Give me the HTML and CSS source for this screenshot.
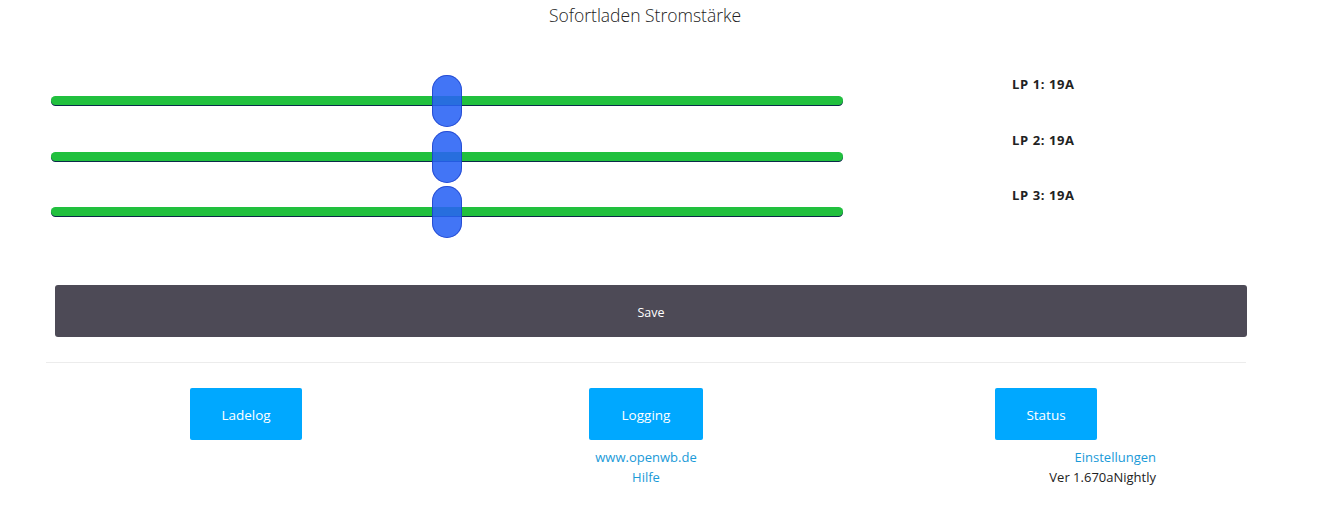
FILE: index.html
```html
<!DOCTYPE html>
<html lang="de">
<head>
<meta charset="utf-8">
<title>Sofortladen Stromstärke</title>
<link rel="stylesheet" href="styles.css">
</head>
<body>
<div class="page">
  <div class="container">
    <h1 class="title">Sofortladen Stromstärke</h1>
    <div class="sliders">
      <div class="slider-row">
        <div class="track"><div class="thumb" style="left: 50%"></div></div>
        <div class="label">LP 1: 19A</div>
      </div>
      <div class="slider-row">
        <div class="track"><div class="thumb" style="left: 50%"></div></div>
        <div class="label">LP 2: 19A</div>
      </div>
      <div class="slider-row">
        <div class="track"><div class="thumb" style="left: 50%"></div></div>
        <div class="label">LP 3: 19A</div>
      </div>
    </div>
    <button class="save">Save</button>
    <hr class="divider">
    <div class="nav">
      <div class="col">
        <a class="btn">Ladelog</a>
      </div>
      <div class="col">
        <a class="btn btn-logging">Logging</a>
        <a class="link">www.openwb.de</a>
        <a class="link">Hilfe</a>
      </div>
      <div class="col col-right">
        <a class="btn btn-status">Status</a>
        <div class="meta">
          <a class="link">Einstellungen</a>
          <span class="version">Ver 1.670aNightly</span>
        </div>
      </div>
    </div>
  </div>
</div>
</body>
</html>
```

FILE: styles.css
```css
html, body {
  margin: 0;
  padding: 0;
  background: #ffffff;
}
body {
  font-family: "Open Sans", "Noto Sans", "DejaVu Sans", sans-serif;
  color: #222;
}
.page {
  width: 1322px;
}
.container {
  width: 1200px;
  margin-left: 46px;
}
.title {
  margin: 0;
  height: 30px;
  line-height: 30px;
  text-align: center;
  font-size: 17.5px;
  font-weight: 300;
  color: #222;
  padding-right: 2px;
}
.sliders {
  margin-top: 44px;
  display: flex;
  flex-direction: column;
}
.slider-row {
  height: 55.5px;
  display: flex;
  align-items: flex-start;
}
.track {
  position: relative;
  margin-left: 5px;
  margin-top: 22px;
  width: 792px;
  height: 9px;
  background: #21c03e;
  border-radius: 5px;
  box-shadow: 0 1px 0 #0b2a4a;
}
.thumb {
  position: absolute;
  top: -21px;
  width: 30px;
  height: 52px;
  transform: translateX(-50%);
  border-radius: 15px;
  background: rgba(40, 98, 245, 0.88);
  box-shadow: inset 0 0 0 1px rgba(20, 50, 190, 0.6);
}
.label {
  margin-left: 169px;
  margin-top: 2px;
  font-size: 13px;
  font-weight: 700;
  letter-spacing: 0.6px;
  line-height: 16px;
  color: #222;
}
.save {
  display: block;
  margin: 44px 0 0 9px;
  padding: 3px 0 0 0;
  width: 1192px;
  height: 52px;
  border: none;
  border-radius: 3px;
  background: #4d4a56;
  color: #fff;
  font-family: inherit;
  font-size: 12.5px;
}
.divider {
  margin: 25px 0 0 0;
  border: none;
  border-top: 1px solid #ececec;
  height: 0;
}
.nav {
  margin-top: 25px;
  display: grid;
  grid-template-columns: 400px 400px 400px;
}
.col {
  display: flex;
  flex-direction: column;
  align-items: center;
}
.btn {
  display: flex;
  align-items: center;
  justify-content: center;
  box-sizing: border-box;
  padding-top: 2px;
  height: 52px;
  width: 112px;
  background: #00a8ff;
  border-radius: 2px;
  color: #fff;
  font-size: 13.5px;
  margin-bottom: 7px;
}
.btn-logging {
  width: 114px;
}
.btn-status {
  width: 102px;
}
.link {
  color: #1a9ad8;
  font-size: 13px;
  line-height: 20px;
  text-decoration: none;
}
.meta {
  align-self: stretch;
  display: flex;
  flex-direction: column;
  align-items: flex-end;
  padding-right: 90px;
}
.version {
  font-size: 13px;
  line-height: 20px;
  color: #222;
}
```
